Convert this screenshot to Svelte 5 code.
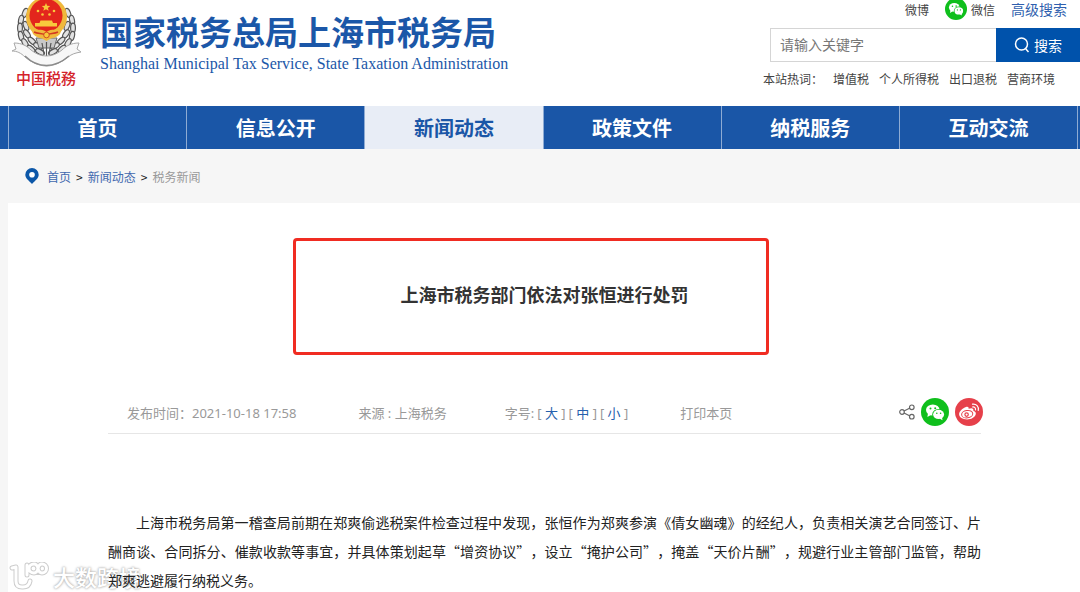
<script lang="ts">
	interface NavItem {
		label: string;
		active?: boolean;
	}

	const navItems: NavItem[] = [
		{ label: '首页' },
		{ label: '信息公开' },
		{ label: '新闻动态', active: true },
		{ label: '政策文件' },
		{ label: '纳税服务' },
		{ label: '互动交流' }
	];

	const hotWords: string[] = ['增值税', '个人所得税', '出口退税', '营商环境'];
	const sizes: string[] = ['大', '中', '小'];

	// Wheat ears of the emblem, left side (mirrored for the right)
	const grains = [
		{ x: 25, y: 13, r: -22 },
		{ x: 21, y: 20, r: -12 },
		{ x: 20, y: 28, r: 0 },
		{ x: 21, y: 36, r: 14 },
		{ x: 25, y: 43, r: 30 },
		{ x: 31, y: 49, r: 48 },
		{ x: 26, y: 26, r: 20 },
		{ x: 27, y: 34, r: 34 },
		{ x: 32, y: 41, r: 46 },
		{ x: 38, y: 46, r: 60 },
		{ x: 40, y: 52, r: 62 }
	];

	let keyword = '';
</script>

{#snippet wechat()}
	<svg class="round-icon" viewBox="0 0 28 28" aria-hidden="true">
		<circle cx="14" cy="14" r="14" fill="#0fbf1c" />
		<path d="M7 15l-.6 4 3.400-2z" fill="#fff" />
		<ellipse cx="11.800" cy="12" rx="6.800" ry="5.600" fill="#fff" />
		<ellipse cx="17.600" cy="16.400" rx="6.400" ry="5.500" fill="#0fbf1c" />
		<ellipse cx="17.600" cy="16.400" rx="5.500" ry="4.600" fill="#fff" />
		<path d="M18.500 20.500l3 1.700-.5-3z" fill="#fff" />
		<circle cx="9.500" cy="10.500" r="1" fill="#0fbf1c" />
		<circle cx="14.200" cy="10.300" r="1" fill="#0fbf1c" />
		<circle cx="15.800" cy="15.200" r=".8" fill="#0fbf1c" />
		<circle cx="19.600" cy="15.200" r=".8" fill="#0fbf1c" />
	</svg>
{/snippet}

{#snippet ear()}
	{#each grains as g}
		<ellipse
			cx={g.x}
			cy={g.y}
			rx="2.400"
			ry="4.800"
			transform="rotate({-g.r} {g.x} {g.y})"
			fill="#e2e2e2"
			stroke="#555"
			stroke-width="1.200"
		/>
	{/each}
{/snippet}

<div class="page">
	<header>
		<a class="brand" href="#home">
			<svg class="emblem" viewBox="10 0 74 92" aria-hidden="true">
				<g>{@render ear()}</g>
				<g transform="translate(93 0) scale(-1 1)">{@render ear()}</g>
				<path d="M36 38h21l-3 10H39z" fill="#c8c8c8" stroke="#666" stroke-width="1" />
				<path d="M46.500 42v14M42 43l2 11M51 43l-2 11" stroke="#555" stroke-width="1.200" />
				<circle cx="46.500" cy="17" r="20.500" fill="#f0b93c" />
				<circle cx="46" cy="15.500" r="16.500" fill="#e3261d" />
				<path
					d="M46 3l1.200 2.800 3 .2-2.300 1.900.8 2.900-2.700-1.600-2.700 1.600.8-2.900-2.300-1.900 3-.2z"
					fill="#f8c93c"
				/>
				<g fill="#f8c93c">
					<circle cx="38" cy="11" r="1.300" />
					<circle cx="42.500" cy="14.500" r="1.300" />
					<circle cx="49.500" cy="14.500" r="1.300" />
					<circle cx="54" cy="11" r="1.300" />
					<path d="M40.500 20.500h11.500l1 2.500h4v3.500H35V23h4.500z" />
				</g>
				<path
					d="M31 28c5 3 10 0 15.500 4 5.500-4 10.500-1 15.500-4l-2 6c-3 3-6 4-9 4.500L46.500 41l-4.500-2.500c-3-.5-6-1.500-9-4.500z"
					fill="#f0b93c"
				/>
				<path
					d="M34 32c4 2 8 1 12 3 4-2 8-1 12-3"
					fill="none"
					stroke="#d33a20"
					stroke-width="1.400"
				/>
				<circle cx="46.500" cy="35" r="2.800" fill="#f8c93c" stroke="#c9351d" stroke-width=".8" />
				<path
					d="M12 51l4-2-2-6c8 0 13 3 17 7 5 4 10 6 15.500 6S57 54 62 50c4-4 9-7 17-7l-2 6 4 3c-6 1-9 2-13 5-6 5-14 9-21.500 9S31 62 25 57c-4-4-8-6-13-6z"
					fill="#f7f7f7"
					stroke="#a8a8a8"
					stroke-width="1"
				/>
				<path
					d="M25 56c6 6 13 9.500 21.500 9.500S62 62 69 56"
					fill="none"
					stroke="#8a8a8a"
					stroke-width="1.500"
				/>
				<text x="16" y="84" class="emblem-text">中国税務</text>
			</svg>
			<span class="brand-text">
				<strong>国家税务总局上海市税务局</strong>
				<span>Shanghai Municipal Tax Service, State Taxation Administration</span>
			</span>
		</a>

		<div class="tools">
			<div class="top-links">
				<a href="#weibo">微博</a>
				<a class="with-icon" href="#wechat">{@render wechat()}微信</a>
				<a class="advanced" href="#advanced">高级搜索</a>
			</div>
			<form class="search" on:submit|preventDefault>
				<input type="text" aria-label="请输入关键字" placeholder="请输入关键字" bind:value={keyword} />
				<button type="submit">
					<svg viewBox="0 0 16 16" aria-hidden="true">
						<circle cx="7.500" cy="7" r="6" />
						<path d="M11.500 11.500l3 3.500" />
					</svg>
					搜索
				</button>
			</form>
			<div class="hot">
				<span>本站热词：</span>
				{#each hotWords as word}
					<a href="#hot">{word}</a>
				{/each}
			</div>
		</div>
	</header>

	<nav class="main-nav">
		{#each navItems as item}
			<a href="#nav" class:active={item.active}>{item.label}</a>
		{/each}
	</nav>

	<nav class="crumbs">
		<svg viewBox="0 0 14 16" aria-hidden="true">
			<path
				d="M7 0a6.700 6.700 0 0 0-6.700 6.700C.3 10.500 4 12.500 7 16c3-3.500 6.700-5.500 6.700-9.300A6.700 6.700 0 0 0 7 0z"
				fill="#0c57a8"
			/>
			<circle cx="7" cy="6.700" r="2.800" fill="#fff" />
		</svg>
		<a href="#home">首页</a>
		<span class="sep">&gt;</span>
		<a href="#news">新闻动态</a>
		<span class="sep">&gt;</span>
		<span class="current">税务新闻</span>
	</nav>

	<main>
		<div class="title">
			<h1>上海市税务部门依法对张恒进行处罚</h1>
			<div class="highlight"></div>
		</div>

		<div class="meta">
			<span class="date">发布时间：2021-10-18 17:58</span>
			<span class="source">来源 : 上海税务</span>
			<span class="sizes">
				字号:
				{#each sizes as size}
					<span>[ <button type="button">{size}</button> ]</span>
				{/each}
			</span>
			<button class="print" type="button">打印本页</button>
			<div class="share">
				<svg class="share-icon" viewBox="0 0 16 16" aria-hidden="true">
					<path d="M5 7l6-3M5 9l6 3" />
					<circle cx="3" cy="8" r="2.300" />
					<circle cx="12.800" cy="3.300" r="2.300" />
					<circle cx="12.800" cy="12.700" r="2.300" />
				</svg>
				<a href="#wechat" aria-label="微信">{@render wechat()}</a>
				<a href="#weibo" aria-label="微博">
					<svg class="round-icon" viewBox="0 0 28 28" aria-hidden="true">
						<circle cx="14" cy="14" r="14" fill="#e6404a" />
						<path
							d="M11 9c1.700-.7 3 0 2.600 1.800 3.200-1.200 5.300-.5 4.700 1.900 2.200.8 2.900 2 2.400 3.800-.9 3-4.500 4.900-8.600 4.900-4.500 0-8-2.100-8-5.200C4.100 13.400 7.600 10.200 11 9z"
							fill="#fff"
						/>
						<ellipse
							cx="12.200"
							cy="16.200"
							rx="5.600"
							ry="3.700"
							transform="rotate(-8 12.200 16.200)"
							fill="none"
							stroke="#e6404a"
							stroke-width="1"
						/>
						<circle cx="11.600" cy="16.600" r="1.700" fill="none" stroke="#e6404a" stroke-width="1.200" />
						<path
							d="M17.500 9c2-.4 3.400 1 3 3M17.500 6.200c3.800-.5 6.600 2.400 5.800 6.300"
							fill="none"
							stroke="#fff"
							stroke-width="1.200"
							stroke-linecap="round"
						/>
					</svg>
				</a>
			</div>
		</div>

		<p>
			上海市税务局第一稽查局前期在郑爽偷逃税案件检查过程中发现，张恒作为郑爽参演《倩女幽魂》的经纪人，负责相关演艺合同签订、片酬商谈、合同拆分、催款收款等事宜，并具体策划起草“增资协议”，设立“掩护公司”，掩盖“天价片酬”，规避行业主管部门监管，帮助郑爽逃避履行纳税义务。
		</p>
	</main>

	<div class="watermark">
		<svg viewBox="0 0 40 28" aria-hidden="true">
			<g fill="none" stroke-linecap="round" stroke-linejoin="round">
				<path
					class="halo"
					d="M3 6l4-1v14q0 6 6 6h1q6 0 7-6M18 3v10M25 2a5 4.500 0 1 0 0 9q3 0 4-4.500t4-4.500a4.500 4.500 0 1 1 0 9q-3 0-4-4.500t-4-4.500"
				/>
				<path
					class="line"
					d="M3 6l4-1v14q0 6 6 6h1q6 0 7-6M18 3v10M25 2a5 4.500 0 1 0 0 9q3 0 4-4.500t4-4.500a4.500 4.500 0 1 1 0 9q-3 0-4-4.500t-4-4.500"
				/>
			</g>
		</svg>
		<span>大数跨境</span>
	</div>
</div>

<style>
	:global(body) {
		margin: 0;
		background: #fff;
	}

	.page {
		position: relative;
		display: flex;
		flex-direction: column;
		min-height: 100vh;
		overflow: hidden;
		font-family: 'Noto Sans CJK SC', 'Noto Sans', sans-serif;
		font-size: 12px;
		color: #444;
		background: #f6f6f6;
	}

	a {
		color: inherit;
		text-decoration: none;
	}

	button {
		padding: 0;
		border: 0;
		background: none;
		font: inherit;
		color: inherit;
		cursor: pointer;
	}

	header {
		display: flex;
		justify-content: space-between;
		height: 106px;
		background: #fff;
	}

	.brand {
		display: flex;
		gap: 16px;
		padding-left: 10px;
		color: #1b57a8;
	}

	.emblem {
		width: 74px;
		height: 92px;
	}

	.emblem-text {
		font-size: 15px;
		font-weight: 500;
		fill: #d4222a;
	}

	.brand-text {
		display: flex;
		flex-direction: column;
		padding-top: 11px;
		white-space: nowrap;
	}

	.brand-text strong {
		font-size: 33px;
		line-height: 40px;
	}

	.brand-text span {
		font-family: 'Liberation Serif', serif;
		font-size: 16px;
		line-height: 26px;
	}

	.tools {
		flex: none;
		width: 317px;
	}

	.top-links {
		display: flex;
		justify-content: flex-end;
		align-items: center;
		gap: 16px;
		height: 18px;
		padding: 0 13px 10px 0;
	}

	.with-icon {
		display: flex;
		align-items: center;
		gap: 4px;
	}

	.round-icon {
		display: block;
		width: 28px;
		height: 28px;
	}

	.with-icon .round-icon {
		width: 22px;
		height: 22px;
	}

	.advanced {
		font-size: 14px;
		color: #2f5fae;
	}

	.search {
		display: flex;
		height: 34px;
		margin-left: 7px;
	}

	.search input {
		flex: 1;
		min-width: 0;
		padding: 0 9px 2px;
		border: 1px solid #d5d5d5;
		border-right: 0;
		border-radius: 0;
		font-family: inherit;
		font-size: 14px;
	}

	.search input::placeholder {
		color: #777;
	}

	.search button {
		display: flex;
		align-items: center;
		justify-content: center;
		gap: 4px;
		width: 84px;
		background: #0052ab;
		font-size: 14px;
		color: #fff;
	}

	.search svg {
		width: 16px;
		height: 16px;
		fill: none;
		stroke: #fff;
		stroke-width: 1.5;
	}

	.hot {
		display: flex;
		gap: 10px;
		line-height: 34px;
		white-space: nowrap;
	}

	.main-nav {
		display: flex;
		padding: 0 2px 0 8px;
		background: #1a56a7;
	}

	.main-nav a {
		flex: 1;
		border-left: 1px solid #8eabd3;
		font-size: 20px;
		font-weight: 700;
		line-height: 43px;
		text-align: center;
		color: #fff;
	}

	.main-nav a:last-child {
		border-right: 1px solid #8eabd3;
	}

	.main-nav a.active {
		background: #e8edf6;
		color: #1a56a7;
	}

	.crumbs {
		display: flex;
		align-items: center;
		gap: 5px;
		height: 54px;
		padding-left: 25px;
		color: #3f68ae;
	}

	.crumbs svg {
		width: 14px;
		height: 16px;
		margin-right: 3px;
	}

	.sep {
		color: #222;
	}

	.current {
		color: #999;
	}

	main {
		flex: 1;
		margin-left: 8px;
		padding: 0 99px 0 100px;
		background: #fff;
	}

	.title {
		position: relative;
		padding: 77px 0 83px;
	}

	h1 {
		margin: 0;
		font-size: 18px;
		line-height: 28px;
		text-align: center;
		color: #333;
	}

	.highlight {
		position: absolute;
		top: 35px;
		left: calc(50% - 252px);
		box-sizing: border-box;
		width: 476px;
		height: 117px;
		border: 3px solid #f02c22;
		border-radius: 4px;
	}

	.meta {
		display: flex;
		align-items: center;
		height: 42px;
		padding-left: 19px;
		border-bottom: 1px solid #e6e6e6;
		font-family: 'Noto Sans', 'Noto Sans CJK SC', sans-serif;
		font-size: 13px;
		color: #999;
	}

	.source {
		margin-left: 62px;
	}

	.sizes {
		display: flex;
		gap: 3px;
		margin-left: 58px;
	}

	.sizes button {
		color: #2560ad;
	}

	.print {
		margin-left: 52px;
	}

	.share {
		display: flex;
		align-items: center;
		gap: 6px;
		margin: 0 -2px 0 auto;
	}

	.share-icon {
		width: 16px;
		height: 16px;
		fill: none;
		stroke: #666;
		stroke-width: 1.2;
	}

	/* Body copy stays readable above the watermark */
	p {
		position: relative;
		z-index: 1;
		margin: 74px 0 0;
		font-size: 14px;
		line-height: 29px;
		text-indent: 2em;
		text-align: justify;
		text-spacing-trim: space-all;
		color: #222;
	}

	.watermark {
		position: absolute;
		bottom: 4px;
		left: 9px;
		display: flex;
		align-items: center;
		gap: 4px;
		font-size: 22px;
		font-weight: 500;
		line-height: 30px;
		color: #fff;
		text-shadow:
			0 0 2px #aaa,
			0 0 3px #bbb;
	}

	.watermark svg {
		width: 40px;
		height: 28px;
	}

	.halo {
		stroke: #cdcdcd;
		stroke-width: 5;
	}

	.line {
		stroke: #fff;
		stroke-width: 3;
	}
</style>
